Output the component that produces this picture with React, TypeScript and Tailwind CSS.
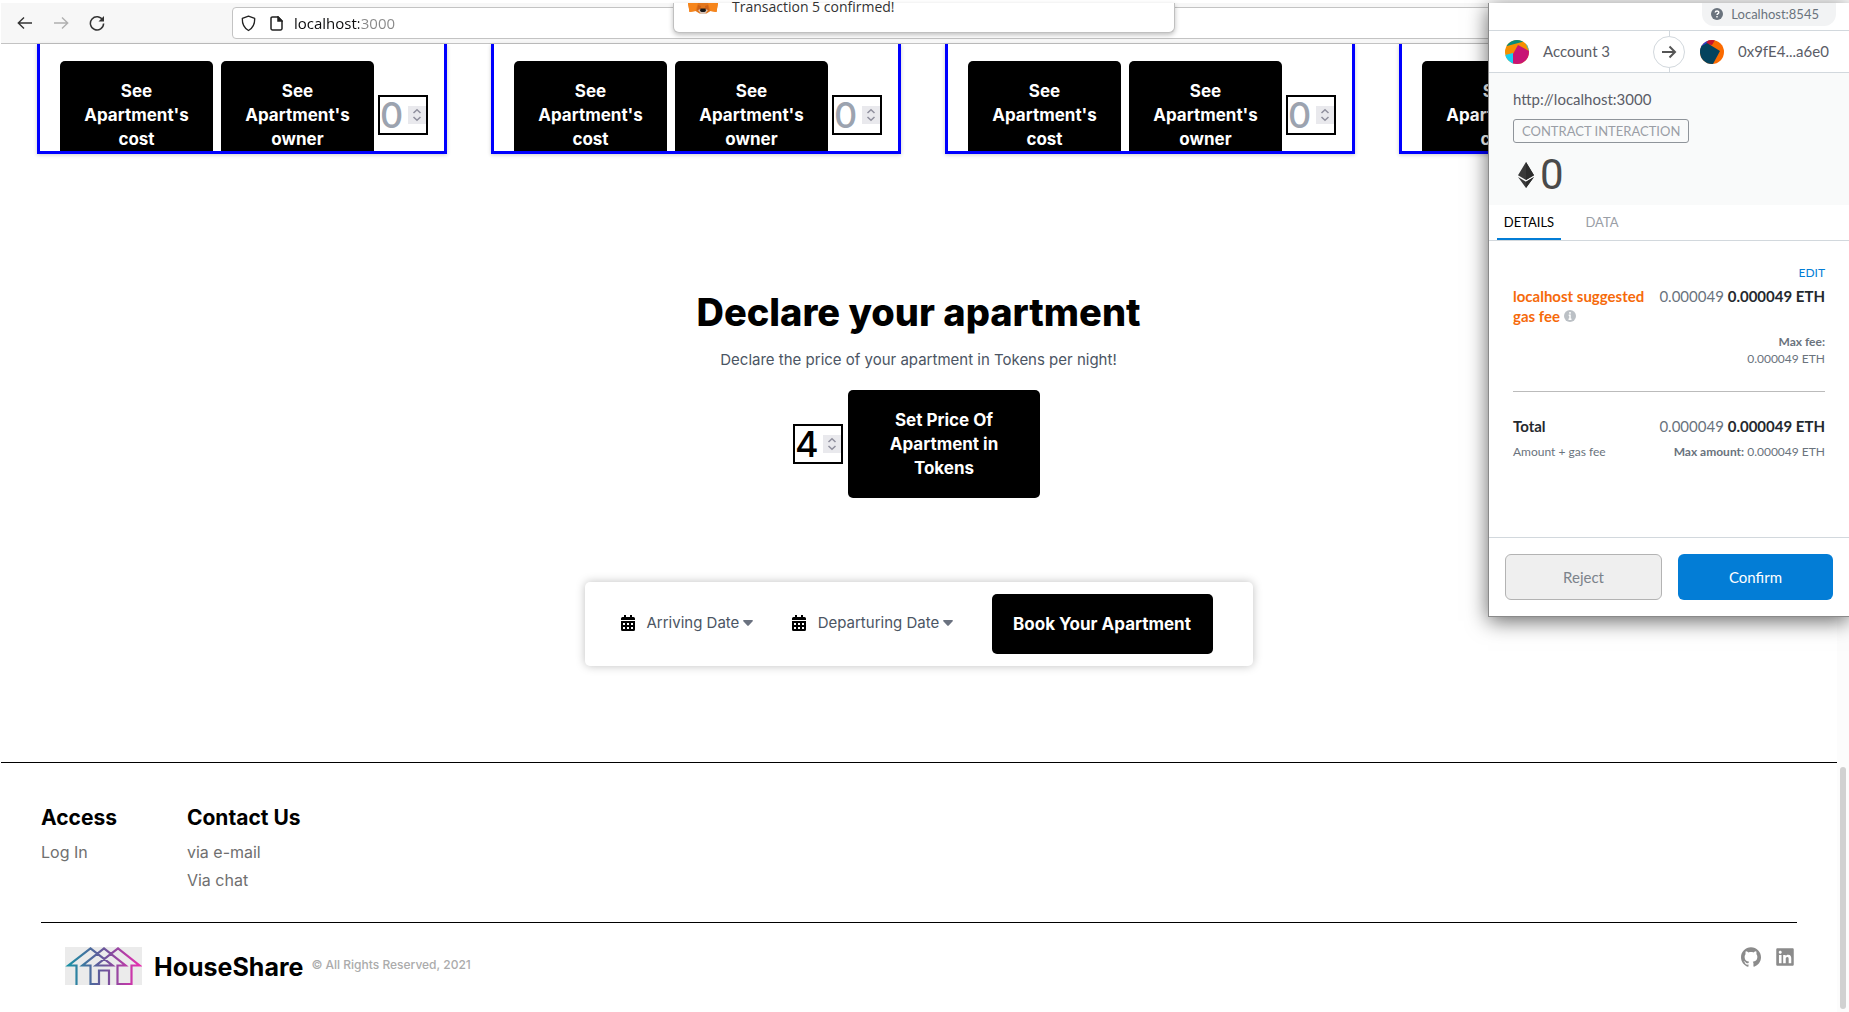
import React from "react";
import { FaLinkedin } from "react-icons/fa";
import { SiGithub } from "react-icons/si";

const blackButton =
  "rounded-[5px] bg-black text-center text-[17px] font-bold leading-6 text-white";

function NumberBox({ label, value, placeholder }: { label: string; value?: number; placeholder?: string }) {
  return (
    <div className="relative h-10 w-[50px] shrink-0">
      <input
        type="number"
        aria-label={label}
        defaultValue={value}
        placeholder={placeholder}
        className="block h-full w-full border-2 border-black bg-white p-0 pr-5 text-[36px] font-medium leading-9 text-black [appearance:textfield] placeholder:text-[#9ca3af] [&::-webkit-inner-spin-button]:appearance-none [&::-webkit-outer-spin-button]:appearance-none"
      />
      <div className="pointer-events-none absolute right-0.5 top-[11px] flex h-[18px] w-[18px] items-center justify-center bg-[#e9e9ed]">
        <svg viewBox="0 0 18 18" className="h-full w-full" fill="none" stroke="#8f8f9d" strokeWidth="1.5">
          <path d="M5.5 7 9 3.7 12.5 7M5.5 11 9 14.3 12.5 11" />
        </svg>
      </div>
    </div>
  );
}

function Toolbar() {
  return (
    <header className="ml-px mt-[3px] flex h-[41px] items-center border-b border-[#c3c3c3] bg-[#f7f7f7]">
      <nav className="flex w-[231px] shrink-0 items-center gap-5 pl-4">
        <button aria-label="Back">
          <svg viewBox="0 0 16 16" className="h-4 w-4" fill="none" stroke="#333" strokeWidth="1.4">
            <path d="M15 8H1.500M7 2.500 1.300 8 7 13.500" />
          </svg>
        </button>
        <button aria-label="Forward" className="text-[#b0b0b0]">
          <svg viewBox="0 0 16 16" className="h-4 w-4" fill="none" stroke="currentColor" strokeWidth="1.4">
            <path d="M1 8h13.500M9 2.500 14.700 8 9 13.500" />
          </svg>
        </button>
        <button aria-label="Reload">
          <svg viewBox="0 0 16 16" className="h-4 w-4" fill="none" stroke="#333" strokeWidth="1.5">
            <path d="M13.800 5.200A6.600 6.600 0 1 0 14.600 8.500" />
            <path d="M15 1v5.500H9.500z" fill="#333" stroke="none" />
          </svg>
        </button>
      </nav>
      <div className="flex h-8 flex-1 items-center rounded-[4px] border border-[#c3c3c3] bg-white pl-2">
        <svg viewBox="0 0 16 18" className="h-[17px] w-[15px]" fill="none" stroke="#222" strokeWidth="1.4">
          <path d="M8 1.200 14.600 3.600C14.800 9 13 13.500 8 16.500 3 13.500 1.200 9 1.400 3.600z" strokeLinejoin="round" />
        </svg>
        <svg viewBox="0 0 13 15" className="ml-3.5 h-[15px] w-[13px]" fill="none" stroke="#222" strokeWidth="1.5">
          <path d="M2.500.9H8L12 5v7.500a1.500 1.500 0 0 1-1.500 1.500h-8A1.500 1.500 0 0 1 1 12.500v-10A1.500 1.500 0 0 1 2.500.9z" />
          <path d="M8 .9V5h4z" fill="#222" />
        </svg>
        <input
          aria-label="Address"
          defaultValue="localhost:3000"
          className="ml-[11px] w-60 bg-[linear-gradient(to_right,#0c0c0d_65px,#888888_65px)] bg-clip-text font-['Open_Sans','Noto_Sans',sans-serif] text-[15px] leading-5 text-transparent caret-black outline-none"
        />
      </div>
    </header>
  );
}

function Fox() {
  return (
    <svg viewBox="0 0 30 11" className="h-[11px] w-[30px]">
      <path d="M0 0h30l-1.500 9-6-1-4 2.500h-7L7.500 8l-6 1z" fill="#e2761b" />
      <path d="M1.500 9 0 0h10L7.500 8zM28.500 9 30 0H20l2.500 8z" fill="#f6851b" />
      <path d="m10 2 3 1-1 5-3-1zM20 2l-3 1 1 5 3-1z" fill="#cd6116" />
      <path d="M10 7l3-1h4l3 1-3 4h-4z" fill="#d7c1b3" />
      <path d="M12.500 5.500h5l.5 2.500-1.500 1h-3L12 8z" fill="#161616" />
    </svg>
  );
}

function ApartmentCard({ index }: { index: number }) {
  return (
    <article className="flex h-[110px] items-start gap-1 overflow-hidden border-x-[3px] border-b-[3px] border-[#0000fe] pl-5 pr-4 pt-[17px] shadow-[0_1px_4px_rgba(0,0,0,0.2)]">
      <div className="flex flex-1 gap-2">
        <button className={`${blackButton} h-[108px] flex-1 px-5`}>See Apartment's cost</button>
        <button className={`${blackButton} h-[108px] flex-1 px-5`}>See Apartment's owner</button>
      </div>
      <div className="mt-[34px]">
        <NumberBox label={`Apartment ${index} number`} placeholder="0" />
      </div>
    </article>
  );
}

function CalendarIcon() {
  return (
    <svg viewBox="0 0 14 16" className="mr-3 h-4 w-3.5">
      <path d="M3 0h2v2h4V0h2v2h1.500A1.500 1.500 0 0 1 14 3.500V5H0V3.500A1.500 1.500 0 0 1 1.500 2H3zM0 6h14v8.500a1.500 1.500 0 0 1-1.500 1.500h-11A1.500 1.500 0 0 1 0 14.500z" />
      <path d="M2 8h2v2H2zM6 8h2v2H6zM10 8h2v2h-2zM2 12h2v2H2zM6 12h2v2H6zM10 12h2v2h-2z" fill="#fff" />
    </svg>
  );
}

function DateField({ label }: { label: string }) {
  return (
    <button className="flex items-center pb-0.5 text-[15px] leading-5 text-[#4b5563]">
      <CalendarIcon />
      {label}
      <svg viewBox="0 0 10 6" className="ml-1 h-1.5 w-2.5" fill="#6b7280">
        <path d="M1 0h8c.9 0 1.200.8.700 1.300L5.700 5.600a1 1 0 0 1-1.400 0L.3 1.300C-.2.800.1 0 1 0z" />
      </svg>
    </button>
  );
}

function HousesLogo() {
  return (
    <svg viewBox="0 0 77 38" className="h-[38px] w-[77px] bg-[#ebebeb]" fill="none" strokeWidth="2.2">
      <defs>
        <linearGradient id="houses" gradientUnits="userSpaceOnUse" x1="0" y1="0" x2="77" y2="0">
          <stop offset="0" stopColor="#1495a5" />
          <stop offset=".5" stopColor="#69569a" />
          <stop offset="1" stopColor="#ee2bb0" />
        </linearGradient>
      </defs>
      <g stroke="url(#houses)">
        <path d="M11.500 38V18.500H3.500L25.500 1.500 47.500 18.500H31L53 1.500 74.500 18.500H66.500V37H52.500V18.500H60.500L39 1.500 17.500 18.500H25.500V37H34V23.500H44V38" />
      </g>
    </svg>
  );
}

function Identicon({ kind }: { kind: "sender" | "contract" }) {
  return (
    <svg viewBox="0 0 24 24" className="h-6 w-6 shrink-0 rounded-full">
      {kind === "sender" ? (
        <>
          <path fill="#f58f00" d="M0 0h24v24H0z" />
          <path fill="#068b78" d="M0 0h24L17 2 2 6z" />
          <path fill="#18d0f2" d="M0 15l8-2 1 11H0zM19 0l5 11V0z" />
          <path fill="#c81475" d="m13 5 11 6v13H8V14z" />
        </>
      ) : (
        <>
          <path fill="#fb6a00" d="M0 0h24v24H0z" />
          <path fill="#2b3fd6" d="M0 0h10L6 5 0 10z" />
          <path fill="#c8142e" d="M8 0h7l-3 5-6-1z" />
          <path fill="#04435e" d="M0 7 7 3l13 8-7 13H0z" />
        </>
      )}
    </svg>
  );
}

function FeeAmount() {
  return (
    <span className="whitespace-nowrap text-right text-[15px] leading-5 text-[#6a737d]">
      0.000049 <strong className="font-bold text-[#24292e]">0.000049 ETH</strong>
    </span>
  );
}

function WalletPopup() {
  return (
    <aside className="absolute right-0 top-[3px] flex w-[361px] flex-col border-b border-l border-[#8a8a8a] bg-white font-[Lato,sans-serif] shadow-[0_4px_20px_rgba(0,0,0,0.6)]">
      <div className="flex h-7 items-start justify-end border-b border-[#d2d8dd] pr-[13px]">
        <div className="flex h-[23px] items-center gap-2 rounded-b-[12px] bg-[#f2f3f4] px-[9px] pb-0.5 text-[13px] text-[#6a737d]">
          <svg viewBox="0 0 12 12" className="h-3 w-3">
            <circle cx="6" cy="6" r="6" fill="#6a737d" />
            <path d="M4.200 4.500C4.300 2.600 7.800 2.500 7.800 4.500 7.800 5.700 6 5.600 6 7.100M6 8v1.400" fill="none" stroke="#fff" strokeWidth="1.4" />
          </svg>
          <span className="pr-2 leading-5">Localhost:8545</span>
        </div>
      </div>
      <div className="flex h-[42px] items-center border-b border-[#d2d8dd] pr-px text-[15px] text-[#5b5d67]">
        <div className="flex flex-1 items-center gap-3.5 pl-4">
          <Identicon kind="sender" />
          <span>Account 3</span>
        </div>
        <div className="flex h-full w-8 flex-col items-center">
          <span className="w-px flex-1 bg-[#d2d8dd]" />
          <span className="flex h-8 w-8 items-center justify-center rounded-full border border-[#d2d8dd]">
            <svg viewBox="0 0 16 16" className="h-4 w-4" fill="none" stroke="#555" strokeWidth="2">
              <path d="M1 8h13M8.500 2.500 14 8l-5.500 5.500" />
            </svg>
          </span>
          <span className="w-px flex-1 bg-[#d2d8dd]" />
        </div>
        <div className="flex flex-1 items-center gap-3.5 pl-[15px]">
          <Identicon kind="contract" />
          <span>0x9fE4...a6e0</span>
        </div>
      </div>
      <div className="flex h-[132px] flex-col items-start bg-[#f9fafa] px-6 pt-4">
        <span className="text-[15px] leading-5 text-[#5b5d67]">http://localhost:3000</span>
        <span className="mt-2.5 rounded-[3px] border border-[#8f949a] px-2 text-[13px] leading-[22px] text-[#9a9ea6]">
          CONTRACT INTERACTION
        </span>
        <div className="mt-3 flex items-center gap-1.5 pl-[5px]">
          <svg viewBox="0 0 16 26" className="h-[26px] w-4" fill="#393939">
            <path d="M8 0l8 13.300-8 4.700-8-4.700zM0 15l8 4.700L16 15 8 26z" />
            <path d="M8 0v18l8-4.700zM8 19.700V26l8-11z" fill="#2c2c2c" />
          </svg>
          <span className="font-[Roboto,sans-serif] text-[42px] leading-10 text-[#4a4a4a]">0</span>
        </div>
      </div>
      <div role="tablist" className="flex h-9 items-stretch border-b border-[#d2d8dd] pl-2 text-[13px] leading-5">
        <button role="tab" aria-selected="true" className="w-16 border-b-2 border-[#037dd6] text-[#000]">
          DETAILS
        </button>
        <button role="tab" aria-selected="false" className="w-[82px] pb-0.5 text-[#9a9ea6]">
          DATA
        </button>
      </div>
      <div className="flex h-[296px] flex-col px-6 pt-[22px]">
        <button className="self-end text-[12px] leading-5 text-[#037dd6]">EDIT</button>
        <div className="mt-[3px] flex items-start justify-between">
          <span className="w-[140px] text-[15px] font-bold leading-5 text-[#f66a0a]">
            localhost suggested gas fee{" "}
            <svg viewBox="0 0 12 12" className="mb-1 inline h-3 w-3">
              <circle cx="6" cy="6" r="6" fill="#bbc0c5" />
              <path d="M6 2v1.800M4.700 5.200H6v3.600M4.500 9.300h3" stroke="#fff" strokeWidth="1.5" fill="none" />
            </svg>
          </span>
          <FeeAmount />
        </div>
        <div className="mt-[7px] flex flex-col items-end text-[12px] leading-[17px] text-[#6a737d]">
          <strong className="font-bold">Max fee:</strong>
          <span>0.000049 ETH</span>
        </div>
        <hr className="mt-6 border-[#bbb]" />
        <div className="mt-6 flex justify-between">
          <span className="text-[15px] font-bold leading-5 text-[#24292e]">Total</span>
          <FeeAmount />
        </div>
        <div className="mt-[7px] flex justify-between text-[12px] leading-[18px] text-[#6a737d]">
          <span>Amount + gas fee</span>
          <span>
            <strong className="font-bold">Max amount:</strong> 0.000049 ETH
          </span>
        </div>
      </div>
      <div className="flex gap-4 border-t border-[#d2d8dd] px-4 py-4 text-[15px]">
        <button className="h-[46px] flex-1 rounded-[6px] border border-[#b3b3b3] bg-[#efefef] text-[#7c838b]">Reject</button>
        <button className="h-[46px] flex-1 rounded-[6px] bg-[#037dd6] text-white">Confirm</button>
      </div>
    </aside>
  );
}

export default function App() {
  return (
    <div className="relative flex min-h-screen flex-col overflow-hidden bg-white font-[Inter,sans-serif] text-black">
      <Toolbar />
      <div className="flex flex-1">
        <div className="flex min-w-0 flex-1 flex-col">
          <section className="grid grid-cols-4 gap-11 pl-[37px] pr-7">
            {[1, 2, 3, 4].map((n) => (
              <ApartmentCard key={n} index={n} />
            ))}
          </section>

          <main className="flex flex-col items-center">
            <h1 className="mt-[138px] text-[38px] font-extrabold leading-10">Declare your apartment</h1>
            <p className="mt-[18px] text-[15px] leading-5 text-[#4b5563]">
              Declare the price of your apartment in Tokens per night!
            </p>
            <form className="mt-5 flex items-center gap-[5px] pr-1" onSubmit={(e) => e.preventDefault()}>
              <NumberBox label="Price in tokens" value={4} />
              <button className={`${blackButton} h-[108px] w-48 px-8`}>Set Price Of Apartment in Tokens</button>
            </form>
            <section className="mt-[84px] flex h-[84px] w-[668px] items-center justify-between rounded-[5px] pl-9 pr-10 shadow-[0_0_10px_rgba(0,0,0,0.25)]">
              <DateField label="Arriving Date" />
              <DateField label="Departuring Date" />
              <button className={`${blackButton} h-[60px] w-[221px]`}>Book Your Apartment</button>
            </section>
          </main>

          <footer className="ml-px mt-24 border-t border-black px-10">
            <div className="flex gap-[70px] pt-[43px]">
              <div>
                <h2 className="text-[21px] font-bold leading-6">Access</h2>
                <a href="#login" className="mt-2 block text-[16px] leading-7 text-[#6f6f6f]">Log In</a>
              </div>
              <div>
                <h2 className="text-[21px] font-bold leading-6">Contact Us</h2>
                <a href="#mail" className="mt-2 block text-[16px] leading-7 text-[#6f6f6f]">via e-mail</a>
                <a href="#chat" className="block text-[16px] leading-7 text-[#6f6f6f]">Via chat</a>
              </div>
            </div>
            <div className="mt-7 flex items-start border-t border-black pl-6 pt-6">
              <HousesLogo />
              <span className="ml-3 mt-1 text-[25px] font-bold leading-8">HouseShare</span>
              <span className="ml-2 mt-2 text-[12px] font-medium leading-5 text-[#ababab]">© All Rights Reserved, 2021</span>
              <div className="ml-auto flex gap-3.5 pr-0.5 text-[#8b8b8b]">
                <a href="#github" aria-label="GitHub"><SiGithub className="h-5 w-5" /></a>
                <a href="#linkedin" aria-label="LinkedIn"><FaLinkedin className="h-5 w-5" /></a>
              </div>
            </div>
          </footer>
        </div>
        <div className="flex w-3 shrink-0 flex-col items-center justify-end bg-[#fcfcfc] pb-[3px]">
          <div className="h-[242px] w-1.5 rounded-full bg-[#d1d1d1]" />
        </div>
      </div>

      <div role="status" className="absolute left-[673px] top-[3px] flex h-[30px] w-[502px] items-start gap-3.5 rounded-b-[6px] border border-t-0 border-[#c0c0c0] bg-white pl-3.5 shadow-[0_2px_5px_rgba(0,0,0,0.25)]">
        <Fox />
        <span className="-mt-1.5 font-['Open_Sans','Noto_Sans',sans-serif] text-[14px] leading-5 text-[#333]">
          Transaction 5 confirmed!
        </span>
      </div>
      <WalletPopup />
    </div>
  );
}
